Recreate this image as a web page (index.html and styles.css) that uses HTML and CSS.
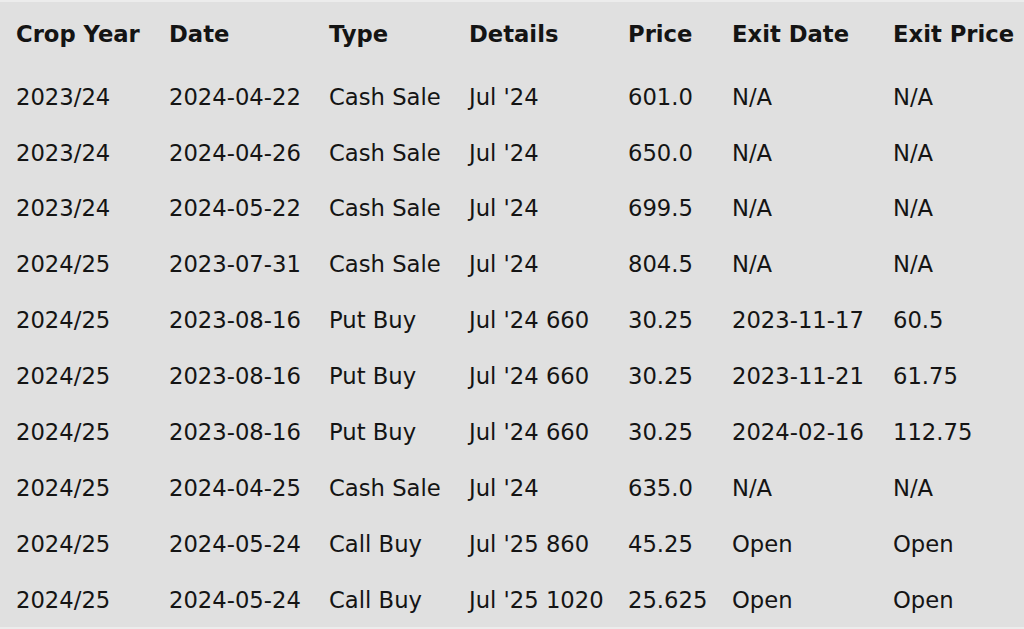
FILE: index.html
```html
<!DOCTYPE html>
<html lang="en">
<head>
<meta charset="utf-8">
<title>Trades</title>
<link rel="stylesheet" href="styles.css">
</head>
<body>
<div class="panel">
<table class="trades">
<colgroup>
<col class="c-year"><col class="c-date"><col class="c-type"><col class="c-details"><col class="c-price"><col class="c-exitdate"><col class="c-exitprice">
</colgroup>
<thead>
<tr><th>Crop Year</th><th>Date</th><th>Type</th><th>Details</th><th>Price</th><th>Exit Date</th><th>Exit Price</th></tr>
</thead>
<tbody>
<tr><td>2023/24</td><td>2024-04-22</td><td>Cash Sale</td><td>Jul '24</td><td>601.0</td><td>N/A</td><td>N/A</td></tr>
<tr><td>2023/24</td><td>2024-04-26</td><td>Cash Sale</td><td>Jul '24</td><td>650.0</td><td>N/A</td><td>N/A</td></tr>
<tr><td>2023/24</td><td>2024-05-22</td><td>Cash Sale</td><td>Jul '24</td><td>699.5</td><td>N/A</td><td>N/A</td></tr>
<tr><td>2024/25</td><td>2023-07-31</td><td>Cash Sale</td><td>Jul '24</td><td>804.5</td><td>N/A</td><td>N/A</td></tr>
<tr><td>2024/25</td><td>2023-08-16</td><td>Put Buy</td><td>Jul '24 660</td><td>30.25</td><td>2023-11-17</td><td>60.5</td></tr>
<tr><td>2024/25</td><td>2023-08-16</td><td>Put Buy</td><td>Jul '24 660</td><td>30.25</td><td>2023-11-21</td><td>61.75</td></tr>
<tr><td>2024/25</td><td>2023-08-16</td><td>Put Buy</td><td>Jul '24 660</td><td>30.25</td><td>2024-02-16</td><td>112.75</td></tr>
<tr><td>2024/25</td><td>2024-04-25</td><td>Cash Sale</td><td>Jul '24</td><td>635.0</td><td>N/A</td><td>N/A</td></tr>
<tr><td>2024/25</td><td>2024-05-24</td><td>Call Buy</td><td>Jul '25 860</td><td>45.25</td><td>Open</td><td>Open</td></tr>
<tr><td>2024/25</td><td>2024-05-24</td><td>Call Buy</td><td>Jul '25 1020</td><td>25.625</td><td>Open</td><td>Open</td></tr>
</tbody>
</table>
</div>
</body>
</html>
```

FILE: styles.css
```css
html, body {
  margin: 0;
  padding: 0;
  background: #e0e0e0;
}
body {
  width: 1024px;
  height: 629px;
  overflow: hidden;
}
.panel {
  box-sizing: border-box;
  height: 629px;
  border-top: 2px solid #ececec;
  border-bottom: 2px solid #ececec;
  background: #e0e0e0;
  padding-left: 16px;
  overflow: hidden;
}
.trades {
  table-layout: fixed;
  border-collapse: collapse;
  width: 1008px;
  font-family: "DejaVu Sans", sans-serif;
  font-size: 22.7px;
  line-height: 27px;
  color: #141414;
}
.c-year { width: 153px; }
.c-date { width: 160px; }
.c-type { width: 140px; }
.c-details { width: 159px; }
.c-price { width: 104px; }
.c-exitdate { width: 161px; }
.c-exitprice { width: 131px; }
.trades th,
.trades td {
  padding: 0;
  text-align: left;
  white-space: nowrap;
  vertical-align: top;
}
.trades th {
  font-weight: bold;
  padding-top: 19px;
  padding-bottom: 21.3px;
}
.trades td {
  padding-top: 14.45px;
  padding-bottom: 14.45px;
}
```
